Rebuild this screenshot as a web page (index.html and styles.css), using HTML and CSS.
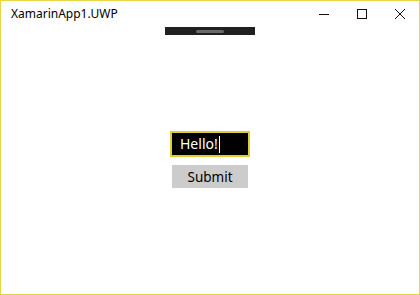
FILE: index.html
```html
<!DOCTYPE html>
<html lang="en">
<head>
    <meta charset="UTF-8">
    <title>XamarinApp1.UWP</title>
    <link rel="stylesheet" href="styles.css">
</head>
<body>
    <!-- app window -->
    <div class="window">
        <div class="titlebar">
            <span class="title">XamarinApp1.UWP</span>
            <div class="caption">
                <span class="cap-btn">
                    <svg width="10" height="10" viewBox="0 0 10 10"><path d="M0 5.5h10" stroke="#111" stroke-width="1"/></svg>
                </span>
                <span class="cap-btn">
                    <svg width="10" height="10" viewBox="0 0 10 10"><rect x="0.5" y="0.5" width="9" height="9" fill="none" stroke="#111" stroke-width="1"/></svg>
                </span>
                <span class="cap-btn">
                    <svg width="10" height="10" viewBox="0 0 10 10"><path d="M0 0L10 10M10 0L0 10" stroke="#111" stroke-width="1"/></svg>
                </span>
            </div>
        </div>

        <!-- drag handle under title -->
        <div class="handle"><span class="grip"></span></div>

        <div class="content">
            <div class="entry">Hello!<span class="caret"></span></div>
            <button class="submit">Submit</button>
        </div>
    </div>
</body>
</html>
```

FILE: styles.css
```css
body {
    margin: 0;
    background: #ffffff;
    font-family: "Noto Sans", "Open Sans", sans-serif;
}

.window {
    width: 418px;
    height: 293px;
    border: 1px solid #e6d646;
    display: flex;
    flex-direction: column;
}

.titlebar {
    height: 26px;
    display: flex;
    align-items: center;
    justify-content: space-between;
}

.title {
    padding-left: 10px;
    font-size: 12px;
    color: #000;
    margin-top: -1px;
}

.caption {
    display: flex;
    height: 100%;
}

.cap-btn {
    width: 38px;
    display: flex;
    align-items: center;
    justify-content: center;
}

.handle {
    align-self: center;
    width: 90px;
    height: 8px;
    background: #202020;
    display: flex;
    align-items: center;
    justify-content: center;
}

.grip {
    width: 28px;
    height: 3px;
    border-radius: 2px;
    background: #6a6a6a;
}

.content {
    display: flex;
    flex-direction: column;
    align-items: center;
    padding-top: 96px;
}

.entry {
    width: 80px;
    height: 26px;
    box-sizing: border-box;
    border: 2px solid #e0cd33;
    background: #000;
    color: #fff;
    font-size: 14px;
    line-height: 22px;
    padding-left: 8px;
    display: flex;
    align-items: center;
}

.caret {
    width: 1px;
    height: 17px;
    background: #fff;
    margin-left: 1px;
}

.submit {
    margin-top: 8px;
    width: 76px;
    height: 23px;
    border: none;
    background: #cccccc;
    color: #000;
    font-family: "Noto Sans", "Open Sans", sans-serif;
    font-size: 13.5px;
    padding: 0;
}
```
